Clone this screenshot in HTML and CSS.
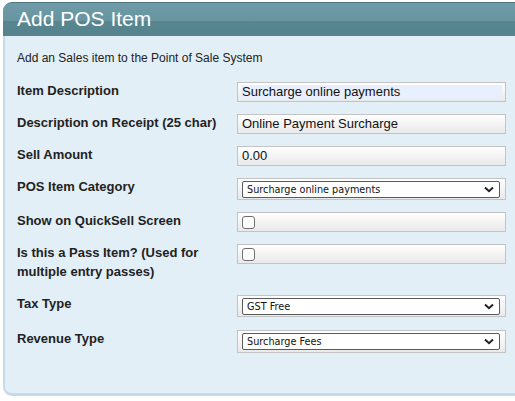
FILE: index.html
```html
<!DOCTYPE html>
<html>
<head>
<meta charset="utf-8">
<link rel="stylesheet" href="styles.css">
</head>
<body>
<div class="panel">
  <div class="panel-head"><h1 class="panel-title">Add POS Item</h1></div>
  <div class="panel-body">
    <p class="intro">Add an Sales item to the Point of Sale System</p>
    <div class="form-grid">
      <div class="label">Item Description</div>
      <div class="field"><span class="value autofill">Surcharge online payments</span></div>

      <div class="label">Description on Receipt (25 char)</div>
      <div class="field"><span class="value">Online Payment Surcharge</span></div>

      <div class="label">Sell Amount</div>
      <div class="field"><span class="value">0.00</span></div>

      <div class="label">POS Item Category</div>
      <div class="field field-select"><div class="select"><span>Surcharge online payments</span><svg class="chev" width="10" height="7" viewBox="0 0 10 7"><path d="M1 1.5 L5 5.2 L9 1.5" fill="none" stroke="#222" stroke-width="2"/></svg></div></div>

      <div class="label">Show on QuickSell Screen</div>
      <div class="field field-check"><span class="checkbox"></span></div>

      <div class="label label-tall">Is this a Pass Item? (Used for multiple entry passes)</div>
      <div class="field field-check"><span class="checkbox"></span></div>

      <div class="label">Tax Type</div>
      <div class="field field-select field-spaced"><div class="select"><span>GST Free</span><svg class="chev" width="10" height="7" viewBox="0 0 10 7"><path d="M1 1.5 L5 5.2 L9 1.5" fill="none" stroke="#222" stroke-width="2"/></svg></div></div>

      <div class="label">Revenue Type</div>
      <div class="field field-select field-big"><div class="select"><span>Surcharge Fees</span><svg class="chev" width="10" height="7" viewBox="0 0 10 7"><path d="M1 1.5 L5 5.2 L9 1.5" fill="none" stroke="#222" stroke-width="2"/></svg></div></div>
    </div>
  </div>
</div>
</body>
</html>
```
FILE: styles.css
```css
html, body {
  margin: 0;
  padding: 0;
  background: #ffffff;
  overflow: hidden;
}
body {
  font-family: "Liberation Sans", Arial, sans-serif;
  color: #111;
}
.panel {
  margin: 2px 0 0 3px;
  width: 512px;
}
.panel-head {
  height: 33px;
  border-top: 1px solid #4b7580;
  border-radius: 9px 0 0 0;
  background: linear-gradient(to bottom, #6f9ca8 0%, #6894a0 56%, #57868f 56%, #55838e 100%);
}
.panel-title {
  margin: 0;
  padding-left: 14px;
  font-size: 21px;
  font-weight: normal;
  line-height: 32px;
  color: #ffffff;
}
.panel-body {
  box-sizing: border-box;
  height: 360px;
  background: #e2eff6;
  border-left: 2px solid #c7dbe6;
  border-bottom: 3px solid #c7dbe6;
  border-bottom-left-radius: 9px;
  padding: 14px 0 0 12px;
}
.intro {
  margin: 0 0 16px 0;
  font-size: 12px;
  line-height: 16px;
  color: #222;
}
.form-grid {
  display: grid;
  grid-template-columns: 220px 269px;
  row-gap: 12px;
  align-items: start;
}
.label {
  margin-top: -1px;
  padding-right: 10px;
  font-size: 13px;
  font-weight: bold;
  line-height: 19px;
  color: #222;
}
.label-tall {
  margin-bottom: 2px;
}
.field {
  box-sizing: border-box;
  height: 20px;
  border: 1px solid #c3c3c3;
  background: linear-gradient(to bottom, #ffffff 0%, #f6f6f6 40%, #e9e9e9 100%);
  padding: 2px 3px;
  display: flex;
  align-items: center;
}
.value {
  flex: 1;
  height: 14px;
  padding-left: 1px;
  font-size: 13px;
  line-height: 14px;
  color: #111;
  white-space: nowrap;
}
.autofill {
  background: #e8f0fe;
}
.field-select {
  height: 22px;
  padding: 2px 5px 2px 4px;
}
.field-spaced {
  margin-bottom: 1px;
}
.field-big {
  height: 23px;
}
.select {
  box-sizing: border-box;
  flex: 1;
  height: 17px;
  background: #ffffff;
  border: 1px solid #5a5a5a;
  border-radius: 2px;
  display: flex;
  align-items: center;
  justify-content: space-between;
  padding: 0 5px 0 4px;
  font-family: "DejaVu Sans", Verdana, sans-serif;
  font-size: 9.7px;
  color: #111;
}
.chev {
  display: block;
}
.field-check {
  padding: 2px 4px;
}
.checkbox {
  box-sizing: border-box;
  width: 13px;
  height: 13px;
  border: 1px solid #6e6e6e;
  border-radius: 3px;
  background: #ffffff;
}
```
